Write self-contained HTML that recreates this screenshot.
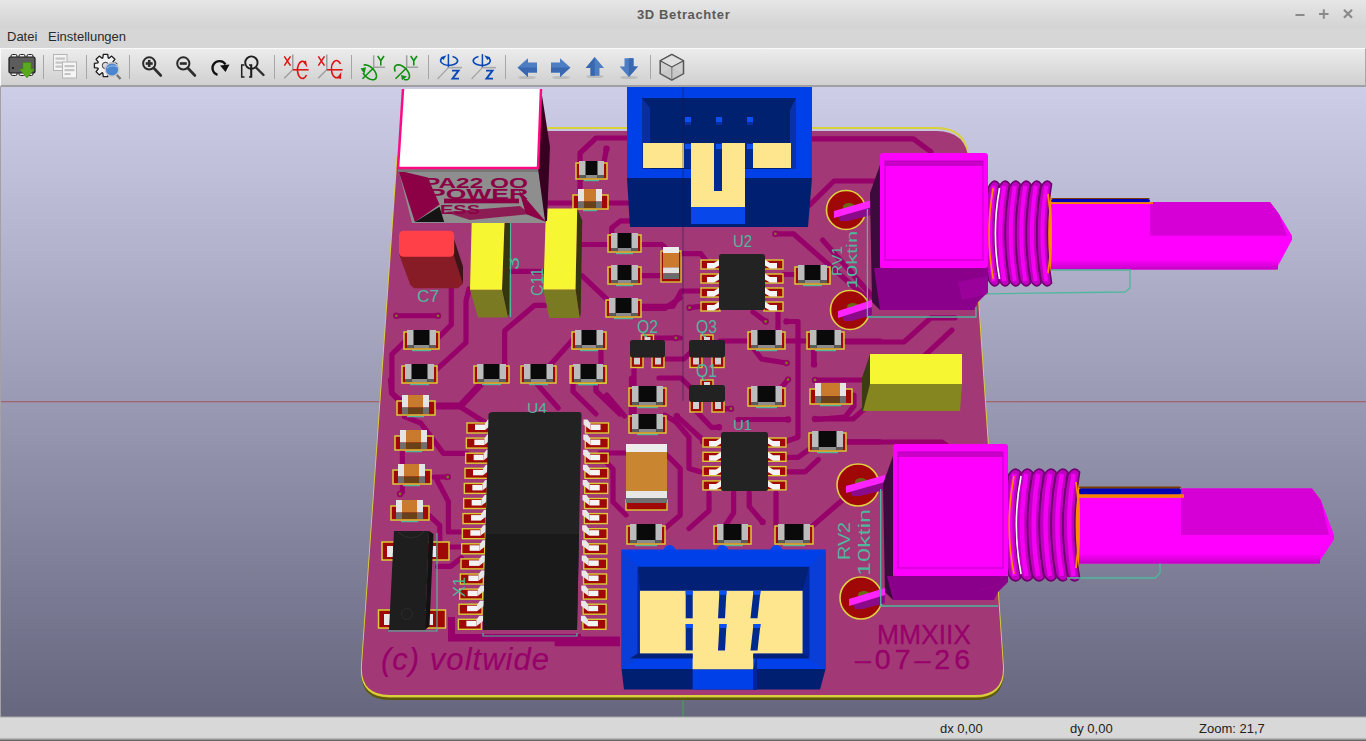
<!DOCTYPE html>
<html><head><meta charset="utf-8">
<style>
*{margin:0;padding:0;box-sizing:border-box}
html,body{width:1366px;height:741px;overflow:hidden;background:#d6d6d6;font-family:"Liberation Sans",sans-serif}
#title{position:absolute;left:0;top:0;width:1366px;height:28px;background:linear-gradient(#e6e6e6,#d3d3d3)}
#title .t{position:absolute;left:637px;top:7px;font-size:13px;font-weight:bold;color:#5a5a5a;letter-spacing:0.62px}
#menu{position:absolute;left:0;top:28px;width:1366px;height:20px;background:#d6d6d6;font-size:13px;color:#2a2a2a}
#menu span{position:absolute;top:1px}
#toolbar{position:absolute;left:0;top:48px;width:1366px;height:39px;background:linear-gradient(#ececec,#d0d0d0);border-top:1px solid #fafafa;border-left:1px solid #fafafa;border-right:1px solid #a8a8a8;border-bottom:2px solid #a0a0a0}
#status{position:absolute;left:0;top:717px;width:1366px;height:24px;background:linear-gradient(#d8d8d8 85%,#b0b0b0 91%,#505050);font-size:13px;color:#222}
#status span{position:absolute;top:4px}
svg{position:absolute;left:0;top:0}
svg text{font-family:"Liberation Sans",sans-serif}
</style></head><body>
<div id="title"><span class="t">3D Betrachter</span></div>
<div id="menu"><span style="left:7px">Datei</span><span style="left:48px">Einstellungen</span></div>
<div id="toolbar"></div>
<div id="status"><span style="left:940px">dx 0,00</span><span style="left:1070px">dy 0,00</span><span style="left:1199px">Zoom: 21,7</span></div>
<svg width="1366" height="741" viewBox="0 0 1366 741"><rect x="1295.5" y="14" width="9" height="2" fill="#8a8a8a"/><rect x="1319" y="13" width="9.5" height="2" fill="#8a8a8a"/><rect x="1322.8" y="9.3" width="2" height="9.5" fill="#8a8a8a"/><path d="M1344,9.8 L1352,17.8 M1352,9.8 L1344,17.8" stroke="#8a8a8a" stroke-width="2.2"/><rect x="43" y="55" width="1" height="24" fill="#a6a6a6"/><rect x="86" y="55" width="1" height="24" fill="#a6a6a6"/><rect x="129" y="55" width="1" height="24" fill="#a6a6a6"/><rect x="274" y="55" width="1" height="24" fill="#a6a6a6"/><rect x="351" y="55" width="1" height="24" fill="#a6a6a6"/><rect x="428" y="55" width="1" height="24" fill="#a6a6a6"/><rect x="505" y="55" width="1" height="24" fill="#a6a6a6"/><rect x="650" y="55" width="1" height="24" fill="#a6a6a6"/><g><rect x="11" y="54.5" width="6" height="4" rx="1.5" fill="#eee" stroke="#222" stroke-width="1"/><rect x="11" y="71.5" width="6" height="4" rx="1.5" fill="#eee" stroke="#222" stroke-width="1"/><rect x="19" y="54.5" width="6" height="4" rx="1.5" fill="#eee" stroke="#222" stroke-width="1"/><rect x="19" y="71.5" width="6" height="4" rx="1.5" fill="#eee" stroke="#222" stroke-width="1"/><rect x="27" y="54.5" width="6" height="4" rx="1.5" fill="#eee" stroke="#222" stroke-width="1"/><rect x="27" y="71.5" width="6" height="4" rx="1.5" fill="#eee" stroke="#222" stroke-width="1"/><rect x="9" y="57" width="26" height="16" rx="1.5" fill="#5c5c5c" stroke="#1a1a1a" stroke-width="1.2"/><circle cx="13" cy="68" r="1.1" fill="#111"/><polygon points="23,62.5 31,62.5 31,69 34.5,69 27,78 19.5,69 23,69" fill="#5aa81e" stroke="#3d8a10" stroke-width="0.6"/></g><rect x="53.5" y="54.5" width="13.5" height="16" fill="#f4f4f4" stroke="#b4b4b4" stroke-width="1"/><rect x="55.5" y="57.5" width="9.5" height="2.2" fill="#c4c4c4"/><rect x="55.5" y="61.5" width="9.5" height="2.2" fill="#c4c4c4"/><rect x="55.5" y="65.5" width="9.5" height="2.2" fill="#c4c4c4"/><rect x="62.5" y="62" width="14" height="16" fill="#f6f6f6" stroke="#b4b4b4" stroke-width="1"/><rect x="64.5" y="65" width="10" height="2.2" fill="#c4c4c4"/><rect x="64.5" y="69" width="10" height="2.2" fill="#c4c4c4"/><rect x="64.5" y="73" width="6" height="2" fill="#c4c4c4"/><polygon points="113.0,62.8 116.6,63.3 116.6,67.7 113.0,68.2 112.7,68.9 114.9,71.7 111.7,74.9 108.9,72.7 108.2,73.0 107.7,76.6 103.3,76.6 102.8,73.0 102.1,72.7 99.3,74.9 96.1,71.7 98.3,68.9 98.0,68.2 94.4,67.7 94.4,63.3 98.0,62.8 98.3,62.1 96.1,59.3 99.3,56.1 102.1,58.3 102.8,58.0 103.3,54.4 107.7,54.4 108.2,58.0 108.9,58.3 111.7,56.1 114.9,59.3 112.7,62.1" fill="#f2f2f2" stroke="#1c1c1c" stroke-width="1.3" stroke-linejoin="round"/><circle cx="105.5" cy="65.5" r="3.2" fill="#ddd" stroke="#333" stroke-width="1"/><line x1="116" y1="74" x2="120.5" y2="79" stroke="#777" stroke-width="2.5"/><circle cx="112" cy="69.5" r="6.8" fill="#4a86d0" stroke="#c8c8c8" stroke-width="1.4"/><path d="M107,68 Q112,64 117,67" stroke="#9cc0ec" stroke-width="1" fill="none"/><circle cx="149.2" cy="63.4" r="6.1" fill="none" stroke="#2a2a2a" stroke-width="2"/><line x1="153.7" y1="68" x2="160.8" y2="75.5" stroke="#2e2e2e" stroke-width="2.6" stroke-linecap="round"/><rect x="145.7" y="62.2" width="7" height="2.6" fill="#2a2a2a"/><rect x="147.9" y="59.9" width="2.6" height="7" fill="#2a2a2a"/><circle cx="183.3" cy="63.4" r="6.1" fill="none" stroke="#2a2a2a" stroke-width="2"/><line x1="187.8" y1="68" x2="194.9" y2="75.5" stroke="#2e2e2e" stroke-width="2.6" stroke-linecap="round"/><rect x="179.8" y="62.2" width="7" height="2.6" fill="#2a2a2a"/><path d="M217.5,74.8 A7,7 0 1 1 225.5,64.5" fill="none" stroke="#111" stroke-width="2.3"/><polygon points="220,65.5 229.5,64.5 225.5,72" fill="#111"/><circle cx="251.4" cy="62.6" r="6.2" fill="none" stroke="#1e1e1e" stroke-width="1.9"/><line x1="256" y1="67.5" x2="263.5" y2="75" stroke="#2e2e2e" stroke-width="2.4" stroke-linecap="round"/><path d="M244.5,65 L241.7,65 L241.7,77 L244.5,77 M249,65 L251.5,65 L251.5,77 L249,77" fill="none" stroke="#1e1e1e" stroke-width="1.5"/><line x1="251" y1="65" x2="251" y2="77" stroke="#1e1e1e" stroke-width="1.5"/><g transform="translate(0,0)"><line x1="292.8" y1="54.6" x2="292.8" y2="69.8" stroke="#9a9a9a" stroke-width="1.4"/><line x1="292.8" y1="69.8" x2="284.2" y2="78.3" stroke="#9a9a9a" stroke-width="1.2"/><line x1="292.8" y1="69.8" x2="308.6" y2="69.8" stroke="#e01818" stroke-width="1.6"/><path d="M284.3,56.3 L290.5,65.7 M290.5,56.3 L284.3,65.7" stroke="#e01010" stroke-width="1.5"/><path d="M305.5,63 A5,8.6 0 1 0 306.5,75" fill="none" stroke="#e01010" stroke-width="1.6"/><polygon points="303,62 306,60.5 307.3,67.5" fill="#e01010"/></g><g transform="translate(34,0)"><line x1="292.8" y1="54.6" x2="292.8" y2="69.8" stroke="#9a9a9a" stroke-width="1.4"/><line x1="292.8" y1="69.8" x2="284.2" y2="78.3" stroke="#9a9a9a" stroke-width="1.2"/><line x1="292.8" y1="69.8" x2="308.6" y2="69.8" stroke="#e01818" stroke-width="1.6"/><path d="M284.3,56.3 L290.5,65.7 M290.5,56.3 L284.3,65.7" stroke="#e01010" stroke-width="1.5"/><path d="M306.5,64 A5,8.6 0 1 0 304.5,77" fill="none" stroke="#e01010" stroke-width="1.6"/><polygon points="303,78 307,79 307.3,72" fill="#e01010"/></g><g transform="translate(0,0)"><path d="M373.7,55.3 L373.7,67.3 L385.1,67.3" fill="none" stroke="#a0a0a0" stroke-width="1.5"/><path d="M377.7,56 L380.8,60.8 L384,56 M380.8,60.8 L380.8,65.5" fill="none" stroke="#109010" stroke-width="1.6"/><line x1="373.5" y1="68" x2="362.5" y2="78.7" stroke="#109010" stroke-width="1.6"/><polyline points="364.14,64.93 364.85,64.84 365.60,64.85 366.41,64.96 367.25,65.17 368.12,65.49 369.00,65.90 369.88,66.39 370.74,66.97 371.58,67.63 372.39,68.34 373.15,69.12 373.85,69.93 374.49,70.78 375.04,71.65 375.52,72.53 375.90,73.41 376.19,74.27 376.38,75.10 376.47,75.90 376.45,76.64 376.33,77.33 376.11,77.94 375.79,78.48 375.37,78.93 374.87,79.29 374.29,79.55 373.63,79.71 372.91,79.77 372.13,79.73 371.31,79.58 370.46,79.33 369.59,78.99 368.71,78.55 367.83,78.02 366.97,77.42 366.14,76.74 365.35,76.01 364.61,75.22 363.93,74.39 363.32,73.53" fill="none" stroke="#109010" stroke-width="1.6" stroke-linecap="round"/><polygon points="360.5,68.5 366,67.3 364.5,74" fill="#109010"/></g><g transform="translate(33,0)"><path d="M373.7,55.3 L373.7,67.3 L385.1,67.3" fill="none" stroke="#a0a0a0" stroke-width="1.5"/><path d="M377.7,56 L380.8,60.8 L384,56 M380.8,60.8 L380.8,65.5" fill="none" stroke="#109010" stroke-width="1.6"/><line x1="373.5" y1="68" x2="362.5" y2="78.7" stroke="#109010" stroke-width="1.6"/><polyline points="362.00,70.94 361.74,70.08 361.58,69.26 361.53,68.48 361.58,67.75 361.73,67.08 361.98,66.49 362.33,65.98 362.77,65.55 363.29,65.22 363.90,64.99 364.58,64.86 365.32,64.83 366.11,64.91 366.94,65.08 367.80,65.36 368.67,65.73 369.55,66.20 370.42,66.75 371.28,67.38 372.10,68.07 372.87,68.82 373.60,69.62 374.26,70.46 374.85,71.33 375.35,72.21 375.77,73.08 376.10,73.95 376.32,74.80 376.45,75.61 376.47,76.37 376.39,77.08 376.20,77.72 375.92,78.29 375.54,78.77 375.07,79.17 374.51,79.47 373.88,79.67 373.18,79.76 372.42,79.76 371.62,79.65" fill="none" stroke="#109010" stroke-width="1.6" stroke-linecap="round"/><polygon points="368,75 374,76.5 369,80.3" fill="#109010"/></g><g transform="translate(0,0)"><line x1="448.4" y1="54.1" x2="448.4" y2="67.6" stroke="#0a48b8" stroke-width="1.5"/><line x1="448.4" y1="67.6" x2="462" y2="67.6" stroke="#a8a8a8" stroke-width="1.6"/><line x1="448.4" y1="67.6" x2="437.6" y2="79" stroke="#a0a0a0" stroke-width="1.1"/><path d="M443,57.5 A8.5,4.6 0 1 0 452.5,56.5" fill="none" stroke="#0a48b8" stroke-width="1.6"/><polygon points="440.5,57.3 446.5,55.3 443.5,60" fill="#0a48b8"/><path d="M452,70.6 L458.5,70.6 L452.5,78.6 L459,78.6" fill="none" stroke="#0a48b8" stroke-width="1.9"/></g><g transform="translate(34,0)"><line x1="448.4" y1="54.1" x2="448.4" y2="67.6" stroke="#0a48b8" stroke-width="1.5"/><line x1="448.4" y1="67.6" x2="462" y2="67.6" stroke="#a8a8a8" stroke-width="1.6"/><line x1="448.4" y1="67.6" x2="437.6" y2="79" stroke="#a0a0a0" stroke-width="1.1"/><path d="M444.5,56.5 A8.5,4.6 0 1 0 453.8,57.5" fill="none" stroke="#0a48b8" stroke-width="1.6"/><polygon points="456.3,57.3 450.3,55.3 453.3,60" fill="#0a48b8"/><path d="M452,70.6 L458.5,70.6 L452.5,78.6 L459,78.6" fill="none" stroke="#0a48b8" stroke-width="1.9"/></g><ellipse cx="527" cy="77.5" rx="9" ry="1.6" fill="#000" opacity="0.12"/><polygon points="517.5,67.5 528,58.3 528,62.5 537,62.5 537,72.5 528,72.5 528,77 " fill="#4d7ec4"/><polygon points="528,67.5 537,67.5 537,72.5 528,72.5 528,77 517.5,67.5" fill="#3968b0"/><ellipse cx="561" cy="77.5" rx="9" ry="1.6" fill="#000" opacity="0.12"/><polygon points="570.4,67.5 560,58.3 560,62.5 551,62.5 551,72.5 560,72.5 560,77 " fill="#4d7ec4"/><polygon points="560,67.5 551,67.5 551,72.5 560,72.5 560,77 570.4,67.5" fill="#3968b0"/><ellipse cx="595" cy="76.5" rx="9" ry="1.6" fill="#000" opacity="0.12"/><polygon points="594.8,57 604,68 599.5,68 599.5,75.7 590.5,75.7 590.5,68 585.7,68" fill="#4d7ec4"/><polygon points="594.8,57 585.7,68 590.5,68 590.5,75.7 594.8,75.7" fill="#3968b0"/><ellipse cx="629" cy="77.5" rx="9" ry="1.6" fill="#000" opacity="0.12"/><polygon points="628.8,77 638,66.5 633.5,66.5 633.5,58.3 624.5,58.3 624.5,66.5 619.7,66.5" fill="#4d7ec4"/><polygon points="628.8,77 638,66.5 633.5,66.5 633.5,58.3 628.8,58.3" fill="#3968b0"/><polygon points="671.8,54.5 683.5,60.8 683.5,73.7 671.8,80 660.2,73.7 660.2,60.8" fill="#d0d0d0" stroke="#555" stroke-width="1.5" stroke-linejoin="round"/><polygon points="660.2,60.8 671.8,67 683.5,60.8 671.8,54.5" fill="#e0e0e0" stroke="#555" stroke-width="1.3" stroke-linejoin="round"/><line x1="671.8" y1="67" x2="671.8" y2="80" stroke="#555" stroke-width="1.3"/><polygon points="660.8,73.4 671.8,67.2 683,73.4 671.8,79.6" fill="#c0c0c0" opacity="0.5"/><defs><clipPath id="cv"><rect x="1" y="87" width="1365" height="630"/></clipPath><linearGradient id="bg" x1="0" y1="0" x2="0" y2="1"><stop offset="0" stop-color="#cdcde7"/><stop offset="1" stop-color="#66667f"/></linearGradient><linearGradient id="shb" x1="0" y1="0" x2="0" y2="1"><stop offset="0" stop-color="#ff00ff"/><stop offset="1" stop-color="#c400c4"/></linearGradient></defs><g clip-path="url(#cv)"><rect x="0.00" y="87.00" width="1366.00" height="630.00" fill="url(#bg)" /><rect x="0.00" y="401.00" width="1366.00" height="1.30" fill="#a4646f" /><path d="M429.12,134 L936.776,134 Q966.776,134 968.816,164 L1003.22,670 Q1005.26,700 975.264,700 L389.5,700 Q359.5,700 361.6,670 L397.02,164 Q399.12,134 429.12,134 Z" fill="#5b5a0c"/><path d="M429.26,132 L936.64,132 Q966.64,132 968.68,162 L1003.05,667.5 Q1005.09,697.5 975.094,697.5 L389.675,697.5 Q359.675,697.5 361.775,667.5 L397.16,162 Q399.26,132 429.26,132 Z" fill="#d7b533"/><path d="M429.54,128 L936.368,128 Q966.368,128 968.408,158 L1002.95,666 Q1004.99,696 974.992,696 L389.78,696 Q359.78,696 361.88,666 L397.44,158 Q399.54,128 429.54,128 Z" fill="none" stroke="#d9d13c" stroke-width="1.8"/><path d="M429.33,131 L936.572,131 Q966.572,131 968.612,161 L1002.88,665 Q1004.92,695 974.924,695 L389.85,695 Q359.85,695 361.95,665 L397.23,161 Q399.33,131 429.33,131 Z" fill="#a23976"/><polyline points="396.30,315.80 438.00,315.80" fill="none" stroke="#97016a" stroke-width="5" stroke-linejoin="round" stroke-linecap="round"/><circle cx="396.3" cy="315.8" r="3.2" fill="#97016a"/><circle cx="396.3" cy="315.8" r="1.4" fill="#7a7a18"/><circle cx="438" cy="315.8" r="3.2" fill="#97016a"/><circle cx="438" cy="315.8" r="1.4" fill="#7a7a18"/><polyline points="451.30,286.00 451.30,324.70 436.40,339.60" fill="none" stroke="#97016a" stroke-width="5.2" stroke-linejoin="round" stroke-linecap="round"/><polyline points="406.70,339.60 391.90,354.40 391.90,393.00 402.30,405.00" fill="none" stroke="#97016a" stroke-width="5.2" stroke-linejoin="round" stroke-linecap="round"/><polyline points="469.00,289.00 466.00,301.00 466.00,342.60 433.50,372.30" fill="none" stroke="#97016a" stroke-width="5.2" stroke-linejoin="round" stroke-linecap="round"/><polyline points="482.50,381.00 460.00,405.00 436.40,405.00" fill="none" stroke="#97016a" stroke-width="5.2" stroke-linejoin="round" stroke-linecap="round"/><polyline points="544.80,305.40 534.40,305.40 504.70,330.70 504.70,366.30" fill="none" stroke="#97016a" stroke-width="5.2" stroke-linejoin="round" stroke-linecap="round"/><polyline points="510.70,271.30 543.40,271.30" fill="none" stroke="#97016a" stroke-width="5.2" stroke-linejoin="round" stroke-linecap="round"/><polyline points="579.00,244.50 608.70,244.50" fill="none" stroke="#97016a" stroke-width="5.2" stroke-linejoin="round" stroke-linecap="round"/><polyline points="582.00,275.70 608.70,301.00" fill="none" stroke="#97016a" stroke-width="5.2" stroke-linejoin="round" stroke-linecap="round"/><polyline points="611.70,244.50 611.70,228.00 620.60,220.80 629.50,220.80" fill="none" stroke="#97016a" stroke-width="5.2" stroke-linejoin="round" stroke-linecap="round"/><polyline points="641.40,244.50 662.00,244.50 671.00,253.50" fill="none" stroke="#97016a" stroke-width="5.2" stroke-linejoin="round" stroke-linecap="round"/><polyline points="641.40,275.70 662.00,275.70" fill="none" stroke="#97016a" stroke-width="5.2" stroke-linejoin="round" stroke-linecap="round"/><polyline points="641.40,308.40 665.00,308.40 680.00,298.00" fill="none" stroke="#97016a" stroke-width="5.2" stroke-linejoin="round" stroke-linecap="round"/><polyline points="573.00,339.60 546.30,369.30" fill="none" stroke="#97016a" stroke-width="5.2" stroke-linejoin="round" stroke-linecap="round"/><polyline points="601.00,339.60 601.00,366.00" fill="none" stroke="#97016a" stroke-width="5.2" stroke-linejoin="round" stroke-linecap="round"/><polyline points="534.40,381.00 558.20,408.00" fill="none" stroke="#97016a" stroke-width="5.2" stroke-linejoin="round" stroke-linecap="round"/><polyline points="573.00,382.60 573.00,391.40 596.00,414.00" fill="none" stroke="#97016a" stroke-width="5.2" stroke-linejoin="round" stroke-linecap="round"/><polyline points="596.00,382.60 596.00,391.00 620.00,414.00" fill="none" stroke="#97016a" stroke-width="5.2" stroke-linejoin="round" stroke-linecap="round"/><polyline points="634.00,365.00 634.00,420.00" fill="none" stroke="#97016a" stroke-width="5.2" stroke-linejoin="round" stroke-linecap="round"/><polyline points="647.30,338.00 680.00,338.00" fill="none" stroke="#97016a" stroke-width="5.2" stroke-linejoin="round" stroke-linecap="round"/><circle cx="675.8" cy="338" r="3.2" fill="#97016a"/><circle cx="675.8" cy="338" r="1.4" fill="#7a7a18"/><polyline points="665.00,359.00 684.00,359.00 692.40,350.60" fill="none" stroke="#97016a" stroke-width="5.2" stroke-linejoin="round" stroke-linecap="round"/><polyline points="659.00,378.00 681.00,378.00 695.00,392.00" fill="none" stroke="#97016a" stroke-width="5.2" stroke-linejoin="round" stroke-linecap="round"/><polyline points="580.00,180.00 580.00,153.00 596.00,138.00 627.00,138.00" fill="none" stroke="#97016a" stroke-width="5.2" stroke-linejoin="round" stroke-linecap="round"/><circle cx="606.5" cy="148.7" r="3.2" fill="#97016a"/><circle cx="606.5" cy="148.7" r="1.4" fill="#7a7a18"/><polyline points="606.50,148.70 604.00,162.00" fill="none" stroke="#97016a" stroke-width="5.2" stroke-linejoin="round" stroke-linecap="round"/><polyline points="549.00,203.00 579.00,203.00" fill="none" stroke="#97016a" stroke-width="5.2" stroke-linejoin="round" stroke-linecap="round"/><polyline points="609.00,203.00 627.00,203.00" fill="none" stroke="#97016a" stroke-width="5.2" stroke-linejoin="round" stroke-linecap="round"/><polyline points="580.00,180.00 580.00,190.00" fill="none" stroke="#97016a" stroke-width="5.2" stroke-linejoin="round" stroke-linecap="round"/><polyline points="680.00,253.70 700.70,253.70 706.00,260.60" fill="none" stroke="#97016a" stroke-width="5.2" stroke-linejoin="round" stroke-linecap="round"/><polyline points="700.70,291.00 681.30,291.00 673.00,306.30 641.20,306.30" fill="none" stroke="#97016a" stroke-width="5.2" stroke-linejoin="round" stroke-linecap="round"/><polyline points="700.70,306.30 689.60,307.70" fill="none" stroke="#97016a" stroke-width="5.2" stroke-linejoin="round" stroke-linecap="round"/><circle cx="689.6" cy="307.7" r="3.2" fill="#97016a"/><circle cx="689.6" cy="307.7" r="1.4" fill="#7a7a18"/><polyline points="775.40,233.80 793.40,233.80 866.70,298.00" fill="none" stroke="#97016a" stroke-width="5.2" stroke-linejoin="round" stroke-linecap="round"/><circle cx="775.4" cy="233.8" r="3.2" fill="#97016a"/><circle cx="775.4" cy="233.8" r="1.4" fill="#7a7a18"/><polyline points="783.70,274.50 797.50,274.50" fill="none" stroke="#97016a" stroke-width="5.2" stroke-linejoin="round" stroke-linecap="round"/><polyline points="753.00,312.00 765.70,321.50" fill="none" stroke="#97016a" stroke-width="5.2" stroke-linejoin="round" stroke-linecap="round"/><circle cx="765.7" cy="321.5" r="3.2" fill="#97016a"/><circle cx="765.7" cy="321.5" r="1.4" fill="#7a7a18"/><polyline points="778.00,309.00 778.00,339.50" fill="none" stroke="#97016a" stroke-width="5.2" stroke-linejoin="round" stroke-linecap="round"/><circle cx="786.5" cy="321.5" r="3.2" fill="#97016a"/><circle cx="786.5" cy="321.5" r="1.4" fill="#7a7a18"/><polyline points="720.00,341.00 749.00,341.00" fill="none" stroke="#97016a" stroke-width="5.2" stroke-linejoin="round" stroke-linecap="round"/><polyline points="782.30,341.00 808.60,341.00" fill="none" stroke="#97016a" stroke-width="5.2" stroke-linejoin="round" stroke-linecap="round"/><polyline points="825.00,341.00 880.00,341.00" fill="none" stroke="#97016a" stroke-width="5.2" stroke-linejoin="round" stroke-linecap="round"/><polyline points="814.00,345.00 814.00,364.40" fill="none" stroke="#97016a" stroke-width="5.2" stroke-linejoin="round" stroke-linecap="round"/><circle cx="814" cy="364.4" r="3.2" fill="#97016a"/><circle cx="814" cy="364.4" r="1.4" fill="#7a7a18"/><polyline points="753.00,348.00 761.50,359.00 786.50,363.00" fill="none" stroke="#97016a" stroke-width="5.2" stroke-linejoin="round" stroke-linecap="round"/><circle cx="786.5" cy="363" r="3.2" fill="#97016a"/><circle cx="786.5" cy="363" r="1.4" fill="#7a7a18"/><polyline points="788.00,379.60 781.00,388.00" fill="none" stroke="#97016a" stroke-width="5.2" stroke-linejoin="round" stroke-linecap="round"/><circle cx="788" cy="379.6" r="3.2" fill="#97016a"/><circle cx="788" cy="379.6" r="1.4" fill="#7a7a18"/><polyline points="631.50,378.30 631.50,420.00" fill="none" stroke="#97016a" stroke-width="5.2" stroke-linejoin="round" stroke-linecap="round"/><polyline points="720.00,408.70 731.00,408.70" fill="none" stroke="#97016a" stroke-width="5.2" stroke-linejoin="round" stroke-linecap="round"/><circle cx="731" cy="408.7" r="3.2" fill="#97016a"/><circle cx="731" cy="408.7" r="1.4" fill="#7a7a18"/><polyline points="786.50,321.50 798.00,321.50 798.00,437.30 784.90,441.80" fill="none" stroke="#97016a" stroke-width="5.2" stroke-linejoin="round" stroke-linecap="round"/><polyline points="842.00,342.00 904.00,342.00 931.00,317.80 955.00,317.80" fill="none" stroke="#97016a" stroke-width="5.2" stroke-linejoin="round" stroke-linecap="round"/><polyline points="890.00,360.00 920.00,360.00 952.00,330.00" fill="none" stroke="#97016a" stroke-width="5.2" stroke-linejoin="round" stroke-linecap="round"/><polyline points="815.00,380.00 863.70,380.00" fill="none" stroke="#97016a" stroke-width="5.2" stroke-linejoin="round" stroke-linecap="round"/><circle cx="815" cy="380" r="3.2" fill="#97016a"/><circle cx="815" cy="380" r="1.4" fill="#7a7a18"/><polyline points="815.00,419.00 853.00,419.00 863.70,409.50" fill="none" stroke="#97016a" stroke-width="5.2" stroke-linejoin="round" stroke-linecap="round"/><circle cx="815" cy="419" r="3.2" fill="#97016a"/><circle cx="815" cy="419" r="1.4" fill="#7a7a18"/><polyline points="844.80,442.00 942.00,442.00 950.00,448.00" fill="none" stroke="#97016a" stroke-width="5.2" stroke-linejoin="round" stroke-linecap="round"/><polyline points="813.70,342.00 813.70,363.70" fill="none" stroke="#97016a" stroke-width="5.2" stroke-linejoin="round" stroke-linecap="round"/><polyline points="813.00,138.90 913.40,138.90 931.00,151.80" fill="none" stroke="#97016a" stroke-width="5.2" stroke-linejoin="round" stroke-linecap="round"/><polyline points="809.70,205.00 834.00,181.00 874.50,181.00" fill="none" stroke="#97016a" stroke-width="5.2" stroke-linejoin="round" stroke-linecap="round"/><polyline points="822.60,240.00 879.00,304.00" fill="none" stroke="#97016a" stroke-width="5.2" stroke-linejoin="round" stroke-linecap="round"/><polyline points="402.00,401.60 391.60,393.00 390.50,380.00" fill="none" stroke="#97016a" stroke-width="5.2" stroke-linejoin="round" stroke-linecap="round"/><polyline points="438.00,407.00 460.60,407.00 482.00,384.30" fill="none" stroke="#97016a" stroke-width="5.2" stroke-linejoin="round" stroke-linecap="round"/><polyline points="460.60,407.00 486.00,423.00" fill="none" stroke="#97016a" stroke-width="5.2" stroke-linejoin="round" stroke-linecap="round"/><polyline points="404.50,416.70 420.70,423.00 443.40,453.40 467.00,453.40" fill="none" stroke="#97016a" stroke-width="5.2" stroke-linejoin="round" stroke-linecap="round"/><polyline points="433.70,477.00 447.70,477.00" fill="none" stroke="#97016a" stroke-width="5.2" stroke-linejoin="round" stroke-linecap="round"/><circle cx="447.7" cy="477" r="3.2" fill="#97016a"/><circle cx="447.7" cy="477" r="1.4" fill="#7a7a18"/><polyline points="402.40,451.00 402.40,492.00" fill="none" stroke="#97016a" stroke-width="5.2" stroke-linejoin="round" stroke-linecap="round"/><circle cx="400" cy="494" r="3.2" fill="#97016a"/><circle cx="400" cy="494" r="1.4" fill="#7a7a18"/><polyline points="606.70,395.00 624.50,416.00" fill="none" stroke="#97016a" stroke-width="5.2" stroke-linejoin="round" stroke-linecap="round"/><polyline points="664.60,415.00 675.70,421.70 689.00,437.30 689.00,468.50 700.20,471.80" fill="none" stroke="#97016a" stroke-width="5.2" stroke-linejoin="round" stroke-linecap="round"/><circle cx="676.8" cy="416.2" r="3.2" fill="#97016a"/><circle cx="676.8" cy="416.2" r="1.4" fill="#7a7a18"/><polyline points="676.80,416.20 702.40,439.50 702.40,441.80" fill="none" stroke="#97016a" stroke-width="5.2" stroke-linejoin="round" stroke-linecap="round"/><circle cx="719" cy="427.3" r="3.2" fill="#97016a"/><circle cx="719" cy="427.3" r="1.4" fill="#7a7a18"/><polyline points="719.00,427.30 711.40,427.30 693.50,408.40 693.50,404.00" fill="none" stroke="#97016a" stroke-width="5.2" stroke-linejoin="round" stroke-linecap="round"/><circle cx="788" cy="419.5" r="3.2" fill="#97016a"/><circle cx="788" cy="419.5" r="1.4" fill="#7a7a18"/><polyline points="738.00,419.50 788.00,419.50" fill="none" stroke="#97016a" stroke-width="5.2" stroke-linejoin="round" stroke-linecap="round"/><polyline points="854.00,395.00 854.00,406.00 845.00,417.00 816.00,419.50" fill="none" stroke="#97016a" stroke-width="5.2" stroke-linejoin="round" stroke-linecap="round"/><polyline points="787.00,457.40 798.00,457.40 813.80,446.20" fill="none" stroke="#97016a" stroke-width="5.2" stroke-linejoin="round" stroke-linecap="round"/><polyline points="787.00,471.80 805.00,471.80 818.30,459.60" fill="none" stroke="#97016a" stroke-width="5.2" stroke-linejoin="round" stroke-linecap="round"/><polyline points="845.00,441.80 880.00,441.80" fill="none" stroke="#97016a" stroke-width="5.2" stroke-linejoin="round" stroke-linecap="round"/><polyline points="709.00,493.00 709.00,510.80 689.00,528.60" fill="none" stroke="#97016a" stroke-width="5.2" stroke-linejoin="round" stroke-linecap="round"/><polyline points="733.60,493.00 733.60,513.00 724.70,526.40" fill="none" stroke="#97016a" stroke-width="5.2" stroke-linejoin="round" stroke-linecap="round"/><circle cx="762.6" cy="522" r="3.2" fill="#97016a"/><circle cx="762.6" cy="522" r="1.4" fill="#7a7a18"/><polyline points="749.20,493.00 749.20,506.40 762.60,522.00" fill="none" stroke="#97016a" stroke-width="5.2" stroke-linejoin="round" stroke-linecap="round"/><polyline points="776.00,493.00 776.00,526.40" fill="none" stroke="#97016a" stroke-width="5.2" stroke-linejoin="round" stroke-linecap="round"/><polyline points="809.40,528.60 842.80,499.70" fill="none" stroke="#97016a" stroke-width="5.2" stroke-linejoin="round" stroke-linecap="round"/><polyline points="666.80,455.00 680.20,468.50 680.20,515.30 664.60,528.60" fill="none" stroke="#97016a" stroke-width="5.2" stroke-linejoin="round" stroke-linecap="round"/><polyline points="600.00,453.00 624.50,453.00" fill="none" stroke="#97016a" stroke-width="5.2" stroke-linejoin="round" stroke-linecap="round"/><polyline points="606.00,462.00 613.00,469.00 613.00,502.00 626.00,515.00" fill="none" stroke="#97016a" stroke-width="5.2" stroke-linejoin="round" stroke-linecap="round"/><polyline points="425.80,512.40 439.80,525.40 439.80,540.00" fill="none" stroke="#97016a" stroke-width="5.2" stroke-linejoin="round" stroke-linecap="round"/><polyline points="445.00,547.00 464.00,547.00" fill="none" stroke="#97016a" stroke-width="5.2" stroke-linejoin="round" stroke-linecap="round"/><polyline points="437.60,566.40 450.60,566.40 461.40,557.80" fill="none" stroke="#97016a" stroke-width="5.2" stroke-linejoin="round" stroke-linecap="round"/><polyline points="437.00,480.00 448.40,501.60 448.40,532.00 464.00,532.00" fill="none" stroke="#97016a" stroke-width="5.2" stroke-linejoin="round" stroke-linecap="round"/><polygon points="448.00,617.00 455.00,617.00 455.00,634.00 581.00,634.00 581.00,636.60 620.00,636.60 620.00,646.30 554.60,646.30 554.60,641.40 448.00,641.40" fill="#97016a" /><text transform="translate(518.5,270) rotate(-90)" font-size="16" fill="#4fb89c" textLength="13" lengthAdjust="spacingAndGlyphs">3</text><line x1="510.5" y1="215" x2="510.5" y2="317" stroke="#4fb89c" stroke-width="1.2"/><text transform="translate(543,296) rotate(-90)" font-size="16" fill="#4fb89c" textLength="28" lengthAdjust="spacingAndGlyphs">C11</text><rect x="576.00" y="163.00" width="31.00" height="16.00" fill="#a00808" stroke="#dccb36" stroke-width="1.5"/><rect x="579.00" y="161.00" width="25.00" height="17.00" fill="#0a0a0a" /><rect x="579.00" y="161.00" width="6.50" height="14.00" fill="#bcbcbc" /><rect x="597.50" y="161.00" width="6.50" height="14.00" fill="#bcbcbc" /><rect x="585.50" y="175.00" width="12.00" height="3.00" fill="#8c8c8c" /><rect x="579.00" y="175.00" width="6.50" height="3.00" fill="#5c5c5c" /><rect x="597.50" y="175.00" width="6.50" height="3.00" fill="#5c5c5c" /><rect x="584.00" y="180.00" width="15.00" height="1.20" fill="#4fb89c" /><rect x="608.00" y="235.00" width="33.00" height="17.00" fill="#a00808" stroke="#dccb36" stroke-width="1.5"/><rect x="611.00" y="233.00" width="27.00" height="18.00" fill="#0a0a0a" /><rect x="611.00" y="233.00" width="6.50" height="15.00" fill="#bcbcbc" /><rect x="631.50" y="233.00" width="6.50" height="15.00" fill="#bcbcbc" /><rect x="617.50" y="248.00" width="14.00" height="3.00" fill="#8c8c8c" /><rect x="611.00" y="248.00" width="6.50" height="3.00" fill="#5c5c5c" /><rect x="631.50" y="248.00" width="6.50" height="3.00" fill="#5c5c5c" /><rect x="616.00" y="253.00" width="17.00" height="1.20" fill="#4fb89c" /><rect x="608.00" y="267.00" width="33.00" height="17.00" fill="#a00808" stroke="#dccb36" stroke-width="1.5"/><rect x="611.00" y="265.00" width="27.00" height="18.00" fill="#0a0a0a" /><rect x="611.00" y="265.00" width="6.50" height="15.00" fill="#bcbcbc" /><rect x="631.50" y="265.00" width="6.50" height="15.00" fill="#bcbcbc" /><rect x="617.50" y="280.00" width="14.00" height="3.00" fill="#8c8c8c" /><rect x="611.00" y="280.00" width="6.50" height="3.00" fill="#5c5c5c" /><rect x="631.50" y="280.00" width="6.50" height="3.00" fill="#5c5c5c" /><rect x="616.00" y="285.00" width="17.00" height="1.20" fill="#4fb89c" /><rect x="606.00" y="300.00" width="35.00" height="17.00" fill="#a00808" stroke="#dccb36" stroke-width="1.5"/><rect x="609.00" y="298.00" width="29.00" height="18.00" fill="#0a0a0a" /><rect x="609.00" y="298.00" width="6.50" height="15.00" fill="#bcbcbc" /><rect x="631.50" y="298.00" width="6.50" height="15.00" fill="#bcbcbc" /><rect x="615.50" y="313.00" width="16.00" height="3.00" fill="#8c8c8c" /><rect x="609.00" y="313.00" width="6.50" height="3.00" fill="#5c5c5c" /><rect x="631.50" y="313.00" width="6.50" height="3.00" fill="#5c5c5c" /><rect x="614.00" y="318.00" width="19.00" height="1.20" fill="#4fb89c" /><rect x="795.00" y="267.00" width="35.00" height="17.00" fill="#a00808" stroke="#dccb36" stroke-width="1.5"/><rect x="798.00" y="265.00" width="29.00" height="18.00" fill="#0a0a0a" /><rect x="798.00" y="265.00" width="6.50" height="15.00" fill="#bcbcbc" /><rect x="820.50" y="265.00" width="6.50" height="15.00" fill="#bcbcbc" /><rect x="804.50" y="280.00" width="16.00" height="3.00" fill="#8c8c8c" /><rect x="798.00" y="280.00" width="6.50" height="3.00" fill="#5c5c5c" /><rect x="820.50" y="280.00" width="6.50" height="3.00" fill="#5c5c5c" /><rect x="803.00" y="285.00" width="19.00" height="1.20" fill="#4fb89c" /><rect x="572.00" y="332.00" width="34.00" height="17.00" fill="#a00808" stroke="#dccb36" stroke-width="1.5"/><rect x="575.00" y="330.00" width="28.00" height="18.00" fill="#0a0a0a" /><rect x="575.00" y="330.00" width="6.50" height="15.00" fill="#bcbcbc" /><rect x="596.50" y="330.00" width="6.50" height="15.00" fill="#bcbcbc" /><rect x="581.50" y="345.00" width="15.00" height="3.00" fill="#8c8c8c" /><rect x="575.00" y="345.00" width="6.50" height="3.00" fill="#5c5c5c" /><rect x="596.50" y="345.00" width="6.50" height="3.00" fill="#5c5c5c" /><rect x="580.00" y="350.00" width="18.00" height="1.20" fill="#4fb89c" /><rect x="570.00" y="366.00" width="36.00" height="17.00" fill="#a00808" stroke="#dccb36" stroke-width="1.5"/><rect x="573.00" y="364.00" width="30.00" height="18.00" fill="#0a0a0a" /><rect x="573.00" y="364.00" width="6.50" height="15.00" fill="#bcbcbc" /><rect x="596.50" y="364.00" width="6.50" height="15.00" fill="#bcbcbc" /><rect x="579.50" y="379.00" width="17.00" height="3.00" fill="#8c8c8c" /><rect x="573.00" y="379.00" width="6.50" height="3.00" fill="#5c5c5c" /><rect x="596.50" y="379.00" width="6.50" height="3.00" fill="#5c5c5c" /><rect x="578.00" y="384.00" width="20.00" height="1.20" fill="#4fb89c" /><rect x="629.00" y="388.00" width="37.00" height="18.00" fill="#a00808" stroke="#dccb36" stroke-width="1.5"/><rect x="632.00" y="386.00" width="31.00" height="19.00" fill="#0a0a0a" /><rect x="632.00" y="386.00" width="6.50" height="16.00" fill="#bcbcbc" /><rect x="656.50" y="386.00" width="6.50" height="16.00" fill="#bcbcbc" /><rect x="638.50" y="402.00" width="18.00" height="3.00" fill="#8c8c8c" /><rect x="632.00" y="402.00" width="6.50" height="3.00" fill="#5c5c5c" /><rect x="656.50" y="402.00" width="6.50" height="3.00" fill="#5c5c5c" /><rect x="637.00" y="407.00" width="21.00" height="1.20" fill="#4fb89c" /><rect x="748.00" y="332.00" width="37.00" height="17.00" fill="#a00808" stroke="#dccb36" stroke-width="1.5"/><rect x="751.00" y="330.00" width="31.00" height="18.00" fill="#0a0a0a" /><rect x="751.00" y="330.00" width="6.50" height="15.00" fill="#bcbcbc" /><rect x="775.50" y="330.00" width="6.50" height="15.00" fill="#bcbcbc" /><rect x="757.50" y="345.00" width="18.00" height="3.00" fill="#8c8c8c" /><rect x="751.00" y="345.00" width="6.50" height="3.00" fill="#5c5c5c" /><rect x="775.50" y="345.00" width="6.50" height="3.00" fill="#5c5c5c" /><rect x="756.00" y="350.00" width="21.00" height="1.20" fill="#4fb89c" /><rect x="807.00" y="332.00" width="37.00" height="17.00" fill="#a00808" stroke="#dccb36" stroke-width="1.5"/><rect x="810.00" y="330.00" width="31.00" height="18.00" fill="#0a0a0a" /><rect x="810.00" y="330.00" width="6.50" height="15.00" fill="#bcbcbc" /><rect x="834.50" y="330.00" width="6.50" height="15.00" fill="#bcbcbc" /><rect x="816.50" y="345.00" width="18.00" height="3.00" fill="#8c8c8c" /><rect x="810.00" y="345.00" width="6.50" height="3.00" fill="#5c5c5c" /><rect x="834.50" y="345.00" width="6.50" height="3.00" fill="#5c5c5c" /><rect x="815.00" y="350.00" width="21.00" height="1.20" fill="#4fb89c" /><rect x="748.00" y="388.00" width="37.00" height="18.00" fill="#a00808" stroke="#dccb36" stroke-width="1.5"/><rect x="751.00" y="386.00" width="31.00" height="19.00" fill="#0a0a0a" /><rect x="751.00" y="386.00" width="6.50" height="16.00" fill="#bcbcbc" /><rect x="775.50" y="386.00" width="6.50" height="16.00" fill="#bcbcbc" /><rect x="757.50" y="402.00" width="18.00" height="3.00" fill="#8c8c8c" /><rect x="751.00" y="402.00" width="6.50" height="3.00" fill="#5c5c5c" /><rect x="775.50" y="402.00" width="6.50" height="3.00" fill="#5c5c5c" /><rect x="756.00" y="407.00" width="21.00" height="1.20" fill="#4fb89c" /><rect x="404.00" y="332.00" width="35.00" height="17.00" fill="#a00808" stroke="#dccb36" stroke-width="1.5"/><rect x="407.00" y="330.00" width="29.00" height="18.00" fill="#0a0a0a" /><rect x="407.00" y="330.00" width="6.50" height="15.00" fill="#bcbcbc" /><rect x="429.50" y="330.00" width="6.50" height="15.00" fill="#bcbcbc" /><rect x="413.50" y="345.00" width="16.00" height="3.00" fill="#8c8c8c" /><rect x="407.00" y="345.00" width="6.50" height="3.00" fill="#5c5c5c" /><rect x="429.50" y="345.00" width="6.50" height="3.00" fill="#5c5c5c" /><rect x="412.00" y="350.00" width="19.00" height="1.20" fill="#4fb89c" /><rect x="402.00" y="366.00" width="35.00" height="17.00" fill="#a00808" stroke="#dccb36" stroke-width="1.5"/><rect x="405.00" y="364.00" width="29.00" height="18.00" fill="#0a0a0a" /><rect x="405.00" y="364.00" width="6.50" height="15.00" fill="#bcbcbc" /><rect x="427.50" y="364.00" width="6.50" height="15.00" fill="#bcbcbc" /><rect x="411.50" y="379.00" width="16.00" height="3.00" fill="#8c8c8c" /><rect x="405.00" y="379.00" width="6.50" height="3.00" fill="#5c5c5c" /><rect x="427.50" y="379.00" width="6.50" height="3.00" fill="#5c5c5c" /><rect x="410.00" y="384.00" width="19.00" height="1.20" fill="#4fb89c" /><rect x="474.00" y="366.00" width="35.00" height="17.00" fill="#a00808" stroke="#dccb36" stroke-width="1.5"/><rect x="477.00" y="364.00" width="29.00" height="18.00" fill="#0a0a0a" /><rect x="477.00" y="364.00" width="6.50" height="15.00" fill="#bcbcbc" /><rect x="499.50" y="364.00" width="6.50" height="15.00" fill="#bcbcbc" /><rect x="483.50" y="379.00" width="16.00" height="3.00" fill="#8c8c8c" /><rect x="477.00" y="379.00" width="6.50" height="3.00" fill="#5c5c5c" /><rect x="499.50" y="379.00" width="6.50" height="3.00" fill="#5c5c5c" /><rect x="482.00" y="384.00" width="19.00" height="1.20" fill="#4fb89c" /><rect x="521.00" y="366.00" width="35.00" height="17.00" fill="#a00808" stroke="#dccb36" stroke-width="1.5"/><rect x="524.00" y="364.00" width="29.00" height="18.00" fill="#0a0a0a" /><rect x="524.00" y="364.00" width="6.50" height="15.00" fill="#bcbcbc" /><rect x="546.50" y="364.00" width="6.50" height="15.00" fill="#bcbcbc" /><rect x="530.50" y="379.00" width="16.00" height="3.00" fill="#8c8c8c" /><rect x="524.00" y="379.00" width="6.50" height="3.00" fill="#5c5c5c" /><rect x="546.50" y="379.00" width="6.50" height="3.00" fill="#5c5c5c" /><rect x="529.00" y="384.00" width="19.00" height="1.20" fill="#4fb89c" /><rect x="571.00" y="366.00" width="35.00" height="17.00" fill="#a00808" stroke="#dccb36" stroke-width="1.5"/><rect x="574.00" y="364.00" width="29.00" height="18.00" fill="#0a0a0a" /><rect x="574.00" y="364.00" width="6.50" height="15.00" fill="#bcbcbc" /><rect x="596.50" y="364.00" width="6.50" height="15.00" fill="#bcbcbc" /><rect x="580.50" y="379.00" width="16.00" height="3.00" fill="#8c8c8c" /><rect x="574.00" y="379.00" width="6.50" height="3.00" fill="#5c5c5c" /><rect x="596.50" y="379.00" width="6.50" height="3.00" fill="#5c5c5c" /><rect x="579.00" y="384.00" width="19.00" height="1.20" fill="#4fb89c" /><rect x="629.00" y="416.00" width="37.00" height="17.00" fill="#a00808" stroke="#dccb36" stroke-width="1.5"/><rect x="632.00" y="414.00" width="31.00" height="18.00" fill="#0a0a0a" /><rect x="632.00" y="414.00" width="6.50" height="15.00" fill="#bcbcbc" /><rect x="656.50" y="414.00" width="6.50" height="15.00" fill="#bcbcbc" /><rect x="638.50" y="429.00" width="18.00" height="3.00" fill="#8c8c8c" /><rect x="632.00" y="429.00" width="6.50" height="3.00" fill="#5c5c5c" /><rect x="656.50" y="429.00" width="6.50" height="3.00" fill="#5c5c5c" /><rect x="637.00" y="434.00" width="21.00" height="1.20" fill="#4fb89c" /><rect x="809.00" y="433.00" width="37.00" height="18.00" fill="#a00808" stroke="#dccb36" stroke-width="1.5"/><rect x="812.00" y="431.00" width="31.00" height="19.00" fill="#0a0a0a" /><rect x="812.00" y="431.00" width="6.50" height="16.00" fill="#bcbcbc" /><rect x="836.50" y="431.00" width="6.50" height="16.00" fill="#bcbcbc" /><rect x="818.50" y="447.00" width="18.00" height="3.00" fill="#8c8c8c" /><rect x="812.00" y="447.00" width="6.50" height="3.00" fill="#5c5c5c" /><rect x="836.50" y="447.00" width="6.50" height="3.00" fill="#5c5c5c" /><rect x="817.00" y="452.00" width="21.00" height="1.20" fill="#4fb89c" /><rect x="627.00" y="526.00" width="38.00" height="18.00" fill="#a00808" stroke="#dccb36" stroke-width="1.5"/><rect x="630.00" y="524.00" width="32.00" height="19.00" fill="#0a0a0a" /><rect x="630.00" y="524.00" width="6.50" height="16.00" fill="#bcbcbc" /><rect x="655.50" y="524.00" width="6.50" height="16.00" fill="#bcbcbc" /><rect x="636.50" y="540.00" width="19.00" height="3.00" fill="#8c8c8c" /><rect x="630.00" y="540.00" width="6.50" height="3.00" fill="#5c5c5c" /><rect x="655.50" y="540.00" width="6.50" height="3.00" fill="#5c5c5c" /><rect x="635.00" y="545.00" width="22.00" height="1.20" fill="#4fb89c" /><rect x="714.00" y="526.00" width="37.00" height="18.00" fill="#a00808" stroke="#dccb36" stroke-width="1.5"/><rect x="717.00" y="524.00" width="31.00" height="19.00" fill="#0a0a0a" /><rect x="717.00" y="524.00" width="6.50" height="16.00" fill="#bcbcbc" /><rect x="741.50" y="524.00" width="6.50" height="16.00" fill="#bcbcbc" /><rect x="723.50" y="540.00" width="18.00" height="3.00" fill="#8c8c8c" /><rect x="717.00" y="540.00" width="6.50" height="3.00" fill="#5c5c5c" /><rect x="741.50" y="540.00" width="6.50" height="3.00" fill="#5c5c5c" /><rect x="722.00" y="545.00" width="21.00" height="1.20" fill="#4fb89c" /><rect x="775.00" y="526.00" width="38.00" height="18.00" fill="#a00808" stroke="#dccb36" stroke-width="1.5"/><rect x="778.00" y="524.00" width="32.00" height="19.00" fill="#0a0a0a" /><rect x="778.00" y="524.00" width="6.50" height="16.00" fill="#bcbcbc" /><rect x="803.50" y="524.00" width="6.50" height="16.00" fill="#bcbcbc" /><rect x="784.50" y="540.00" width="19.00" height="3.00" fill="#8c8c8c" /><rect x="778.00" y="540.00" width="6.50" height="3.00" fill="#5c5c5c" /><rect x="803.50" y="540.00" width="6.50" height="3.00" fill="#5c5c5c" /><rect x="783.00" y="545.00" width="22.00" height="1.20" fill="#4fb89c" /><rect x="573.00" y="195.00" width="35.00" height="14.00" fill="#a00808" stroke="#dccb36" stroke-width="1.5"/><rect x="584.00" y="189.00" width="12.00" height="12.54" fill="#c97a2c" /><rect x="578.00" y="189.00" width="6.00" height="12.54" fill="#e4e4e4" /><rect x="596.00" y="189.00" width="6.00" height="12.54" fill="#e4e4e4" /><rect x="584.00" y="201.54" width="12.00" height="6.46" fill="#6a4018" /><rect x="578.00" y="201.54" width="6.00" height="6.46" fill="#6e6e6e" /><rect x="596.00" y="201.54" width="6.00" height="6.46" fill="#6e6e6e" /><rect x="583.00" y="210.00" width="14.00" height="1.20" fill="#4fb89c" /><rect x="810.00" y="389.00" width="42.00" height="15.00" fill="#a00808" stroke="#dccb36" stroke-width="1.5"/><rect x="821.00" y="383.00" width="19.00" height="13.20" fill="#c97a2c" /><rect x="815.00" y="383.00" width="6.00" height="13.20" fill="#e4e4e4" /><rect x="840.00" y="383.00" width="6.00" height="13.20" fill="#e4e4e4" /><rect x="821.00" y="396.20" width="19.00" height="6.80" fill="#6a4018" /><rect x="815.00" y="396.20" width="6.00" height="6.80" fill="#6e6e6e" /><rect x="840.00" y="396.20" width="6.00" height="6.80" fill="#6e6e6e" /><rect x="820.00" y="405.00" width="21.00" height="1.20" fill="#4fb89c" /><rect x="397.00" y="401.00" width="38.00" height="14.00" fill="#a00808" stroke="#dccb36" stroke-width="1.5"/><rect x="408.00" y="395.00" width="15.00" height="12.54" fill="#c97a2c" /><rect x="402.00" y="395.00" width="6.00" height="12.54" fill="#e4e4e4" /><rect x="423.00" y="395.00" width="6.00" height="12.54" fill="#e4e4e4" /><rect x="408.00" y="407.54" width="15.00" height="6.46" fill="#6a4018" /><rect x="402.00" y="407.54" width="6.00" height="6.46" fill="#6e6e6e" /><rect x="423.00" y="407.54" width="6.00" height="6.46" fill="#6e6e6e" /><rect x="407.00" y="416.00" width="17.00" height="1.20" fill="#4fb89c" /><rect x="395.00" y="436.00" width="38.00" height="14.00" fill="#a00808" stroke="#dccb36" stroke-width="1.5"/><rect x="406.00" y="430.00" width="15.00" height="12.54" fill="#c97a2c" /><rect x="400.00" y="430.00" width="6.00" height="12.54" fill="#e4e4e4" /><rect x="421.00" y="430.00" width="6.00" height="12.54" fill="#e4e4e4" /><rect x="406.00" y="442.54" width="15.00" height="6.46" fill="#6a4018" /><rect x="400.00" y="442.54" width="6.00" height="6.46" fill="#6e6e6e" /><rect x="421.00" y="442.54" width="6.00" height="6.46" fill="#6e6e6e" /><rect x="405.00" y="451.00" width="17.00" height="1.20" fill="#4fb89c" /><rect x="393.00" y="470.00" width="38.00" height="14.00" fill="#a00808" stroke="#dccb36" stroke-width="1.5"/><rect x="404.00" y="464.00" width="15.00" height="12.54" fill="#c97a2c" /><rect x="398.00" y="464.00" width="6.00" height="12.54" fill="#e4e4e4" /><rect x="419.00" y="464.00" width="6.00" height="12.54" fill="#e4e4e4" /><rect x="404.00" y="476.54" width="15.00" height="6.46" fill="#6a4018" /><rect x="398.00" y="476.54" width="6.00" height="6.46" fill="#6e6e6e" /><rect x="419.00" y="476.54" width="6.00" height="6.46" fill="#6e6e6e" /><rect x="403.00" y="485.00" width="17.00" height="1.20" fill="#4fb89c" /><rect x="391.00" y="506.00" width="38.00" height="14.00" fill="#a00808" stroke="#dccb36" stroke-width="1.5"/><rect x="402.00" y="500.00" width="15.00" height="12.54" fill="#c97a2c" /><rect x="396.00" y="500.00" width="6.00" height="12.54" fill="#e4e4e4" /><rect x="417.00" y="500.00" width="6.00" height="12.54" fill="#e4e4e4" /><rect x="402.00" y="512.54" width="15.00" height="6.46" fill="#6a4018" /><rect x="396.00" y="512.54" width="6.00" height="6.46" fill="#6e6e6e" /><rect x="417.00" y="512.54" width="6.00" height="6.46" fill="#6e6e6e" /><rect x="401.00" y="521.00" width="17.00" height="1.20" fill="#4fb89c" /><rect x="661.00" y="251.00" width="20.00" height="31.00" fill="#a00808" stroke="#dccb36" stroke-width="1.3"/><rect x="663.00" y="247.00" width="16.00" height="6.00" fill="#ececec" /><rect x="663.00" y="253.00" width="16.00" height="14.40" fill="#c97a2c" /><rect x="663.00" y="267.40" width="16.00" height="6.00" fill="#e0e0e0" /><rect x="663.00" y="273.40" width="16.00" height="5.60" fill="#6a6a6a" /><rect x="641.50" y="335.00" width="12.00" height="7.00" fill="#a00808" stroke="#dccb36" stroke-width="1.4"/><rect x="631.00" y="355.50" width="12.00" height="12.00" fill="#a00808" stroke="#dccb36" stroke-width="1.4"/><rect x="652.00" y="355.50" width="12.00" height="12.00" fill="#a00808" stroke="#dccb36" stroke-width="1.4"/><rect x="644.50" y="337.00" width="6.00" height="4.00" fill="#d6d6d6" /><rect x="634.00" y="357.50" width="6.00" height="7.00" fill="#d0d0d0" /><rect x="655.00" y="357.50" width="6.00" height="7.00" fill="#d0d0d0" /><rect x="630" y="340" width="35" height="17.5" rx="2.5" fill="#222"/><rect x="701.00" y="335.00" width="12.00" height="7.00" fill="#a00808" stroke="#dccb36" stroke-width="1.4"/><rect x="690.00" y="355.50" width="12.00" height="12.00" fill="#a00808" stroke="#dccb36" stroke-width="1.4"/><rect x="712.00" y="355.50" width="12.00" height="12.00" fill="#a00808" stroke="#dccb36" stroke-width="1.4"/><rect x="704.00" y="337.00" width="6.00" height="4.00" fill="#d6d6d6" /><rect x="693.00" y="357.50" width="6.00" height="7.00" fill="#d0d0d0" /><rect x="715.00" y="357.50" width="6.00" height="7.00" fill="#d0d0d0" /><rect x="689" y="340" width="36" height="17.5" rx="2.5" fill="#222"/><rect x="701.00" y="380.00" width="12.00" height="7.00" fill="#a00808" stroke="#dccb36" stroke-width="1.4"/><rect x="690.00" y="400.00" width="12.00" height="12.00" fill="#a00808" stroke="#dccb36" stroke-width="1.4"/><rect x="712.00" y="400.00" width="12.00" height="12.00" fill="#a00808" stroke="#dccb36" stroke-width="1.4"/><rect x="704.00" y="382.00" width="6.00" height="4.00" fill="#d6d6d6" /><rect x="693.00" y="402.00" width="6.00" height="7.00" fill="#d0d0d0" /><rect x="715.00" y="402.00" width="6.00" height="7.00" fill="#d0d0d0" /><rect x="689" y="385" width="36" height="17" rx="2.5" fill="#222"/><rect x="701.00" y="260.00" width="19.00" height="9.00" fill="#a00808" stroke="#dccb36" stroke-width="1.4"/><rect x="764.00" y="260.00" width="19.00" height="9.00" fill="#a00808" stroke="#dccb36" stroke-width="1.4"/><polygon points="707.00,263.00 714.00,263.00 720.00,259.00 720.00,265.00 714.00,268.50 707.00,268.50" fill="#f4f4f4" /><polygon points="777.00,263.00 770.00,263.00 764.00,259.00 764.00,265.00 770.00,268.50 777.00,268.50" fill="#f4f4f4" /><rect x="701.00" y="274.00" width="19.00" height="9.00" fill="#a00808" stroke="#dccb36" stroke-width="1.4"/><rect x="764.00" y="274.00" width="19.00" height="9.00" fill="#a00808" stroke="#dccb36" stroke-width="1.4"/><polygon points="707.00,277.00 714.00,277.00 720.00,273.00 720.00,279.00 714.00,282.50 707.00,282.50" fill="#f4f4f4" /><polygon points="777.00,277.00 770.00,277.00 764.00,273.00 764.00,279.00 770.00,282.50 777.00,282.50" fill="#f4f4f4" /><rect x="701.00" y="288.00" width="19.00" height="9.00" fill="#a00808" stroke="#dccb36" stroke-width="1.4"/><rect x="764.00" y="288.00" width="19.00" height="9.00" fill="#a00808" stroke="#dccb36" stroke-width="1.4"/><polygon points="707.00,291.00 714.00,291.00 720.00,287.00 720.00,293.00 714.00,296.50 707.00,296.50" fill="#f4f4f4" /><polygon points="777.00,291.00 770.00,291.00 764.00,287.00 764.00,293.00 770.00,296.50 777.00,296.50" fill="#f4f4f4" /><rect x="701.00" y="302.00" width="19.00" height="9.00" fill="#a00808" stroke="#dccb36" stroke-width="1.4"/><rect x="764.00" y="302.00" width="19.00" height="9.00" fill="#a00808" stroke="#dccb36" stroke-width="1.4"/><polygon points="707.00,305.00 714.00,305.00 720.00,301.00 720.00,307.00 714.00,310.50 707.00,310.50" fill="#f4f4f4" /><polygon points="777.00,305.00 770.00,305.00 764.00,301.00 764.00,307.00 770.00,310.50 777.00,310.50" fill="#f4f4f4" /><rect x="719" y="254" width="46" height="56" rx="2.5" fill="#232323"/><rect x="703.00" y="438.00" width="19.00" height="9.00" fill="#a00808" stroke="#dccb36" stroke-width="1.4"/><rect x="767.00" y="438.00" width="19.00" height="9.00" fill="#a00808" stroke="#dccb36" stroke-width="1.4"/><polygon points="709.00,441.00 716.00,441.00 722.00,437.00 722.00,443.00 716.00,446.50 709.00,446.50" fill="#f4f4f4" /><polygon points="780.00,441.00 773.00,441.00 767.00,437.00 767.00,443.00 773.00,446.50 780.00,446.50" fill="#f4f4f4" /><rect x="703.00" y="452.30" width="19.00" height="9.00" fill="#a00808" stroke="#dccb36" stroke-width="1.4"/><rect x="767.00" y="452.30" width="19.00" height="9.00" fill="#a00808" stroke="#dccb36" stroke-width="1.4"/><polygon points="709.00,455.30 716.00,455.30 722.00,451.30 722.00,457.30 716.00,460.80 709.00,460.80" fill="#f4f4f4" /><polygon points="780.00,455.30 773.00,455.30 767.00,451.30 767.00,457.30 773.00,460.80 780.00,460.80" fill="#f4f4f4" /><rect x="703.00" y="466.60" width="19.00" height="9.00" fill="#a00808" stroke="#dccb36" stroke-width="1.4"/><rect x="767.00" y="466.60" width="19.00" height="9.00" fill="#a00808" stroke="#dccb36" stroke-width="1.4"/><polygon points="709.00,469.60 716.00,469.60 722.00,465.60 722.00,471.60 716.00,475.10 709.00,475.10" fill="#f4f4f4" /><polygon points="780.00,469.60 773.00,469.60 767.00,465.60 767.00,471.60 773.00,475.10 780.00,475.10" fill="#f4f4f4" /><rect x="703.00" y="480.90" width="19.00" height="9.00" fill="#a00808" stroke="#dccb36" stroke-width="1.4"/><rect x="767.00" y="480.90" width="19.00" height="9.00" fill="#a00808" stroke="#dccb36" stroke-width="1.4"/><polygon points="709.00,483.90 716.00,483.90 722.00,479.90 722.00,485.90 716.00,489.40 709.00,489.40" fill="#f4f4f4" /><polygon points="780.00,483.90 773.00,483.90 767.00,479.90 767.00,485.90 773.00,489.40 780.00,489.40" fill="#f4f4f4" /><rect x="721" y="432" width="47" height="59" rx="2.5" fill="#232323"/><rect x="467.00" y="423.00" width="23.00" height="10.00" fill="#a00808" stroke="#dccb36" stroke-width="1.4"/><rect x="585.50" y="423.00" width="23.00" height="10.00" fill="#a00808" stroke="#dccb36" stroke-width="1.4"/><rect x="475.00" y="424.50" width="10.00" height="5.50" fill="#f4f4f4" /><polygon points="485.00,423.50 488.00,419.50 492.00,419.50 492.00,424.50 485.00,430.00" fill="#e8e8e8" /><rect x="590.50" y="424.50" width="10.00" height="5.50" fill="#f4f4f4" /><polygon points="590.50,423.50 587.50,419.50 583.50,419.50 583.50,424.50 590.50,430.00" fill="#e8e8e8" /><rect x="466.34" y="438.10" width="23.00" height="10.00" fill="#a00808" stroke="#dccb36" stroke-width="1.4"/><rect x="585.30" y="438.10" width="23.00" height="10.00" fill="#a00808" stroke="#dccb36" stroke-width="1.4"/><rect x="474.34" y="439.60" width="10.00" height="5.50" fill="#f4f4f4" /><polygon points="484.34,438.60 487.34,434.60 491.34,434.60 491.34,439.60 484.34,445.10" fill="#e8e8e8" /><rect x="590.30" y="439.60" width="10.00" height="5.50" fill="#f4f4f4" /><polygon points="590.30,438.60 587.30,434.60 583.30,434.60 583.30,439.60 590.30,445.10" fill="#e8e8e8" /><rect x="465.67" y="453.20" width="23.00" height="10.00" fill="#a00808" stroke="#dccb36" stroke-width="1.4"/><rect x="585.11" y="453.20" width="23.00" height="10.00" fill="#a00808" stroke="#dccb36" stroke-width="1.4"/><rect x="473.67" y="454.70" width="10.00" height="5.50" fill="#f4f4f4" /><polygon points="483.67,453.70 486.67,449.70 490.67,449.70 490.67,454.70 483.67,460.20" fill="#e8e8e8" /><rect x="590.11" y="454.70" width="10.00" height="5.50" fill="#f4f4f4" /><polygon points="590.11,453.70 587.11,449.70 583.11,449.70 583.11,454.70 590.11,460.20" fill="#e8e8e8" /><rect x="465.01" y="468.30" width="23.00" height="10.00" fill="#a00808" stroke="#dccb36" stroke-width="1.4"/><rect x="584.91" y="468.30" width="23.00" height="10.00" fill="#a00808" stroke="#dccb36" stroke-width="1.4"/><rect x="473.01" y="469.80" width="10.00" height="5.50" fill="#f4f4f4" /><polygon points="483.01,468.80 486.01,464.80 490.01,464.80 490.01,469.80 483.01,475.30" fill="#e8e8e8" /><rect x="589.91" y="469.80" width="10.00" height="5.50" fill="#f4f4f4" /><polygon points="589.91,468.80 586.91,464.80 582.91,464.80 582.91,469.80 589.91,475.30" fill="#e8e8e8" /><rect x="464.34" y="483.40" width="23.00" height="10.00" fill="#a00808" stroke="#dccb36" stroke-width="1.4"/><rect x="584.71" y="483.40" width="23.00" height="10.00" fill="#a00808" stroke="#dccb36" stroke-width="1.4"/><rect x="472.34" y="484.90" width="10.00" height="5.50" fill="#f4f4f4" /><polygon points="482.34,483.90 485.34,479.90 489.34,479.90 489.34,484.90 482.34,490.40" fill="#e8e8e8" /><rect x="589.71" y="484.90" width="10.00" height="5.50" fill="#f4f4f4" /><polygon points="589.71,483.90 586.71,479.90 582.71,479.90 582.71,484.90 589.71,490.40" fill="#e8e8e8" /><rect x="463.68" y="498.50" width="23.00" height="10.00" fill="#a00808" stroke="#dccb36" stroke-width="1.4"/><rect x="584.52" y="498.50" width="23.00" height="10.00" fill="#a00808" stroke="#dccb36" stroke-width="1.4"/><rect x="471.68" y="500.00" width="10.00" height="5.50" fill="#f4f4f4" /><polygon points="481.68,499.00 484.68,495.00 488.68,495.00 488.68,500.00 481.68,505.50" fill="#e8e8e8" /><rect x="589.52" y="500.00" width="10.00" height="5.50" fill="#f4f4f4" /><polygon points="589.52,499.00 586.52,495.00 582.52,495.00 582.52,500.00 589.52,505.50" fill="#e8e8e8" /><rect x="463.01" y="513.60" width="23.00" height="10.00" fill="#a00808" stroke="#dccb36" stroke-width="1.4"/><rect x="584.32" y="513.60" width="23.00" height="10.00" fill="#a00808" stroke="#dccb36" stroke-width="1.4"/><rect x="471.01" y="515.10" width="10.00" height="5.50" fill="#f4f4f4" /><polygon points="481.01,514.10 484.01,510.10 488.01,510.10 488.01,515.10 481.01,520.60" fill="#e8e8e8" /><rect x="589.32" y="515.10" width="10.00" height="5.50" fill="#f4f4f4" /><polygon points="589.32,514.10 586.32,510.10 582.32,510.10 582.32,515.10 589.32,520.60" fill="#e8e8e8" /><rect x="462.35" y="528.70" width="23.00" height="10.00" fill="#a00808" stroke="#dccb36" stroke-width="1.4"/><rect x="584.13" y="528.70" width="23.00" height="10.00" fill="#a00808" stroke="#dccb36" stroke-width="1.4"/><rect x="470.35" y="530.20" width="10.00" height="5.50" fill="#f4f4f4" /><polygon points="480.35,529.20 483.35,525.20 487.35,525.20 487.35,530.20 480.35,535.70" fill="#e8e8e8" /><rect x="589.13" y="530.20" width="10.00" height="5.50" fill="#f4f4f4" /><polygon points="589.13,529.20 586.13,525.20 582.13,525.20 582.13,530.20 589.13,535.70" fill="#e8e8e8" /><rect x="461.68" y="543.80" width="23.00" height="10.00" fill="#a00808" stroke="#dccb36" stroke-width="1.4"/><rect x="583.93" y="543.80" width="23.00" height="10.00" fill="#a00808" stroke="#dccb36" stroke-width="1.4"/><rect x="469.68" y="545.30" width="10.00" height="5.50" fill="#f4f4f4" /><polygon points="479.68,544.30 482.68,540.30 486.68,540.30 486.68,545.30 479.68,550.80" fill="#e8e8e8" /><rect x="588.93" y="545.30" width="10.00" height="5.50" fill="#f4f4f4" /><polygon points="588.93,544.30 585.93,540.30 581.93,540.30 581.93,545.30 588.93,550.80" fill="#e8e8e8" /><rect x="461.02" y="558.90" width="23.00" height="10.00" fill="#a00808" stroke="#dccb36" stroke-width="1.4"/><rect x="583.73" y="558.90" width="23.00" height="10.00" fill="#a00808" stroke="#dccb36" stroke-width="1.4"/><rect x="469.02" y="560.40" width="10.00" height="5.50" fill="#f4f4f4" /><polygon points="479.02,559.40 482.02,555.40 486.02,555.40 486.02,560.40 479.02,565.90" fill="#e8e8e8" /><rect x="588.73" y="560.40" width="10.00" height="5.50" fill="#f4f4f4" /><polygon points="588.73,559.40 585.73,555.40 581.73,555.40 581.73,560.40 588.73,565.90" fill="#e8e8e8" /><rect x="460.36" y="574.00" width="23.00" height="10.00" fill="#a00808" stroke="#dccb36" stroke-width="1.4"/><rect x="583.54" y="574.00" width="23.00" height="10.00" fill="#a00808" stroke="#dccb36" stroke-width="1.4"/><rect x="468.36" y="575.50" width="10.00" height="5.50" fill="#f4f4f4" /><polygon points="478.36,574.50 481.36,570.50 485.36,570.50 485.36,575.50 478.36,581.00" fill="#e8e8e8" /><rect x="588.54" y="575.50" width="10.00" height="5.50" fill="#f4f4f4" /><polygon points="588.54,574.50 585.54,570.50 581.54,570.50 581.54,575.50 588.54,581.00" fill="#e8e8e8" /><rect x="459.69" y="589.10" width="23.00" height="10.00" fill="#a00808" stroke="#dccb36" stroke-width="1.4"/><rect x="583.34" y="589.10" width="23.00" height="10.00" fill="#a00808" stroke="#dccb36" stroke-width="1.4"/><rect x="467.69" y="590.60" width="10.00" height="5.50" fill="#f4f4f4" /><polygon points="477.69,589.60 480.69,585.60 484.69,585.60 484.69,590.60 477.69,596.10" fill="#e8e8e8" /><rect x="588.34" y="590.60" width="10.00" height="5.50" fill="#f4f4f4" /><polygon points="588.34,589.60 585.34,585.60 581.34,585.60 581.34,590.60 588.34,596.10" fill="#e8e8e8" /><rect x="459.03" y="604.20" width="23.00" height="10.00" fill="#a00808" stroke="#dccb36" stroke-width="1.4"/><rect x="583.14" y="604.20" width="23.00" height="10.00" fill="#a00808" stroke="#dccb36" stroke-width="1.4"/><rect x="467.03" y="605.70" width="10.00" height="5.50" fill="#f4f4f4" /><polygon points="477.03,604.70 480.03,600.70 484.03,600.70 484.03,605.70 477.03,611.20" fill="#e8e8e8" /><rect x="588.14" y="605.70" width="10.00" height="5.50" fill="#f4f4f4" /><polygon points="588.14,604.70 585.14,600.70 581.14,600.70 581.14,605.70 588.14,611.20" fill="#e8e8e8" /><rect x="458.36" y="619.30" width="23.00" height="10.00" fill="#a00808" stroke="#dccb36" stroke-width="1.4"/><rect x="582.95" y="619.30" width="23.00" height="10.00" fill="#a00808" stroke="#dccb36" stroke-width="1.4"/><rect x="466.36" y="620.80" width="10.00" height="5.50" fill="#f4f4f4" /><polygon points="476.36,619.80 479.36,615.80 483.36,615.80 483.36,620.80 476.36,626.30" fill="#e8e8e8" /><rect x="587.95" y="620.80" width="10.00" height="5.50" fill="#f4f4f4" /><polygon points="587.95,619.80 584.95,615.80 580.95,615.80 580.95,620.80 587.95,626.30" fill="#e8e8e8" /><path d="M493,412 L579,412 Q581.5,412 581.5,414.5 L577,630 L483,630 L488.5,414.5 Q489,412 493,412 Z" fill="#222222"/><polygon points="486.00,534.00 579.00,534.00 577.00,630.00 483.00,630.00" fill="#1a1a1a" /><rect x="382.00" y="542.00" width="67.00" height="18.00" fill="#a00808" stroke="#dccb36" stroke-width="1.5"/><rect x="378.50" y="610.00" width="67.00" height="18.00" fill="#a00808" stroke="#dccb36" stroke-width="1.5"/><rect x="387.00" y="546.00" width="6.00" height="11.00" fill="#e8e8e8" /><rect x="430.00" y="546.00" width="6.00" height="11.00" fill="#e8e8e8" /><rect x="384.00" y="614.00" width="6.00" height="11.00" fill="#e8e8e8" /><rect x="427.00" y="614.00" width="6.00" height="11.00" fill="#e8e8e8" /><polygon points="394.00,531.00 429.00,531.00 425.00,630.00 389.00,630.00" fill="#1e1e1e" /><polygon points="429.00,531.00 433.50,534.00 429.50,626.00 425.00,630.00" fill="#121212" /><path d="M398,532 Q411,544 424,532" fill="none" stroke="#2e2e2e" stroke-width="1"/><circle cx="407" cy="614" r="5.5" fill="none" stroke="#2c2c2c" stroke-width="1"/><rect x="626.00" y="500.00" width="41.00" height="10.00" fill="#a00808" stroke="#dccb36" stroke-width="1.4"/><rect x="626.00" y="444.00" width="41.00" height="8.00" fill="#ececec" /><rect x="626.00" y="452.00" width="41.00" height="39.00" fill="#c98530" /><rect x="626.00" y="491.00" width="41.00" height="8.00" fill="#e6e6e6" /><rect x="626.00" y="498.00" width="41.00" height="5.00" fill="#707070" /><polygon points="399.00,254.00 454.20,254.00 463.00,275.00 462.70,284.00 458.00,288.30 414.00,288.30 410.30,285.00" fill="#881c26" /><polygon points="453.00,236.00 463.00,266.50 463.00,284.00 454.20,256.60" fill="#3c1418" /><rect x="399" y="230.7" width="55.2" height="26" rx="4.5" fill="#ff4048"/><polygon points="505.00,209.00 510.00,221.00 509.00,313.60 508.00,317.60 502.00,289.70" fill="#353510" /><polygon points="470.00,289.70 502.00,289.70 508.00,317.60 478.00,317.60" fill="#7a7a22" /><polygon points="472.00,209.00 505.00,209.00 502.00,289.70 470.00,289.70" fill="#f6f632" /><polygon points="577.20,208.40 582.20,220.40 580.70,314.00 579.70,318.00 575.50,289.40" fill="#353510" /><polygon points="543.40,289.40 575.50,289.40 579.70,318.00 549.30,318.00" fill="#7a7a22" /><polygon points="546.00,208.40 577.20,208.40 575.50,289.40 543.40,289.40" fill="#f6f632" /><polygon points="870.00,354.00 862.00,378.00 862.00,411.00 870.00,411.00" fill="#3c3c12" /><polygon points="870.00,384.00 962.00,384.00 960.00,411.00 863.00,411.00" fill="#868620" /><rect x="870.00" y="354.00" width="92.00" height="30.00" fill="#f6f632" /><polygon points="398.00,168.00 538.00,168.00 546.00,223.00 412.00,223.00" fill="#8e8e8e" /><polygon points="398.50,170.50 427.80,177.60 439.50,204.50 414.90,222.00" fill="#8c0046" /><polygon points="414.90,222.00 439.50,206.80 444.20,222.00" fill="#141414" /><text x="424" y="187.5" font-size="14" font-weight="bold" fill="#8c0046" textLength="104" lengthAdjust="spacingAndGlyphs">PA22 OO</text><text x="428" y="199" font-size="14" font-weight="bold" fill="#8c0046" textLength="100" lengthAdjust="spacingAndGlyphs">POWER</text><rect x="444.00" y="198.60" width="75.00" height="4.70" fill="#8c0046" /><text x="440" y="214" font-size="13" font-weight="bold" fill="#8c0046" textLength="40" lengthAdjust="spacingAndGlyphs">ESS</text><polygon points="519.00,190.40 546.00,222.00 526.00,214.00" fill="#8c0046" /><polygon points="445.00,212.00 520.00,206.00 530.00,214.00 470.00,220.00" fill="#8c0046" opacity="0.8"/><rect x="398.00" y="168.00" width="140.00" height="4.00" fill="#777" /><polygon points="541.00,89.00 550.00,147.00 547.00,221.00 545.00,221.00 538.00,168.00" fill="#380020" /><polygon points="403.00,89.00 541.00,89.00 538.00,168.00 398.00,168.00" fill="#ffffff" /><polyline points="403,89 398,168 538,168 541,89" fill="none" stroke="#ff0a82" stroke-width="2.5"/><polygon points="627.00,86.00 812.00,86.00 812.00,178.00 627.00,178.00" fill="#0040e8" /><polygon points="627.00,178.00 812.00,178.00 808.00,227.00 630.00,227.00" fill="#001f70" /><rect x="642.00" y="98.00" width="154.00" height="71.00" fill="#002070" /><polygon points="796.00,98.00 796.00,169.00 790.00,169.00 790.00,110.00" fill="#0a32a8" /><polygon points="642.00,98.00 650.00,108.00 650.00,169.00 642.00,169.00" fill="#0a2ea0" /><rect x="643.00" y="143.00" width="41.00" height="25.00" fill="#fde68e" /><rect x="753.00" y="143.00" width="38.00" height="25.00" fill="#fde68e" /><rect x="691.00" y="143.00" width="54.00" height="64.00" fill="#fde68e" /><rect x="714.00" y="143.00" width="8.00" height="48.00" fill="#012a90" /><rect x="691.00" y="207.00" width="54.00" height="17.00" fill="#0848ea" /><rect x="684.00" y="143.00" width="7.00" height="25.00" fill="#012a90" /><rect x="745.00" y="143.00" width="8.00" height="25.00" fill="#012a90" /><rect x="685.00" y="117.00" width="6.00" height="5.00" fill="#0a50f4" /><rect x="685.00" y="122.00" width="6.00" height="3.00" fill="#0a2ea0" /><rect x="685.00" y="144.00" width="6.00" height="5.00" fill="#0a50f4" /><rect x="716.00" y="117.00" width="6.00" height="5.00" fill="#0a50f4" /><rect x="716.00" y="122.00" width="6.00" height="3.00" fill="#0a2ea0" /><rect x="716.00" y="144.00" width="6.00" height="5.00" fill="#0a50f4" /><rect x="747.00" y="117.00" width="6.00" height="5.00" fill="#0a50f4" /><rect x="747.00" y="122.00" width="6.00" height="3.00" fill="#0a2ea0" /><rect x="747.00" y="144.00" width="6.00" height="5.00" fill="#0a50f4" /><circle cx="669.6" cy="551" r="6" fill="#0a46f0"/><circle cx="722.4" cy="551" r="6" fill="#0a46f0"/><circle cx="776.3" cy="551" r="6" fill="#0a46f0"/><polygon points="621.50,549.50 825.60,549.50 825.60,669.00 621.50,669.00" fill="#0040e8" /><polygon points="621.50,669.00 825.60,669.00 820.00,689.50 624.00,689.50" fill="#001f70" /><polygon points="637.50,566.70 809.50,566.70 803.00,590.80 639.80,590.80" fill="#012076" /><polygon points="621.50,549.50 637.50,566.70 639.80,657.00 621.50,669.00" fill="#0a3ed8" /><polygon points="825.60,549.50 809.50,566.70 803.00,657.00 825.60,669.00" fill="#0a3ed8" /><rect x="639.80" y="590.80" width="163.00" height="63.00" fill="#fde68e" /><polygon points="802.70,591.00 809.50,566.70 809.50,657.00 802.70,657.00" fill="#01259a" /><polygon points="637.50,566.70 639.80,590.80 639.80,657.00 637.50,657.00" fill="#01259a" /><rect x="692.60" y="653.00" width="60.70" height="16.50" fill="#fde68e" /><polygon points="630.00,658.60 637.20,653.40 692.60,653.40 692.60,658.60" fill="#00207a" /><polygon points="753.30,653.40 803.00,653.40 810.00,658.60 753.30,658.60" fill="#00207a" /><rect x="692.60" y="669.50" width="60.70" height="20.00" fill="#0040e8" /><polygon points="753.30,669.00 757.00,654.00 757.00,690.00 753.30,690.00" fill="#01259a" /><polygon points="685.70,590.80 692.70,590.80 692.70,618.30 685.70,618.30" fill="#012a90" /><polygon points="685.70,590.80 692.70,590.80 692.70,594.80 685.70,594.80" fill="#0a50f4" /><polygon points="685.70,624.00 692.70,624.00 692.70,650.40 685.70,650.40" fill="#012a90" /><polygon points="685.70,624.00 692.70,624.00 692.70,628.00 685.70,628.00" fill="#0a50f4" /><polygon points="719.50,590.80 726.50,590.80 725.00,618.30 718.00,618.30" fill="#012a90" /><polygon points="719.50,590.80 726.50,590.80 726.35,594.80 719.35,594.80" fill="#0a50f4" /><polygon points="719.50,624.00 726.50,624.00 725.00,650.40 718.00,650.40" fill="#012a90" /><polygon points="719.50,624.00 726.50,624.00 726.35,628.00 719.35,628.00" fill="#0a50f4" /><polygon points="753.50,590.80 760.50,590.80 757.50,618.30 750.50,618.30" fill="#012a90" /><polygon points="753.50,590.80 760.50,590.80 760.20,594.80 753.20,594.80" fill="#0a50f4" /><polygon points="753.50,624.00 760.50,624.00 757.50,650.40 750.50,650.40" fill="#012a90" /><polygon points="753.50,624.00 760.50,624.00 760.20,628.00 753.20,628.00" fill="#0a50f4" /><circle cx="846" cy="210" r="19.5" fill="#a00808" stroke="#e0d040" stroke-width="1.6"/><ellipse cx="849" cy="207" rx="6" ry="4" fill="#6a6a12"/><polygon points="838.00,216.00 872.00,206.00 872.00,215.00 848.00,221.00 840.00,221.00" fill="#8a0a8a" /><polygon points="834.00,211.00 872.00,200.00 872.00,207.00 834.00,218.00" fill="#ff24ff" /><circle cx="850" cy="310" r="19.5" fill="#a00808" stroke="#e0d040" stroke-width="1.6"/><ellipse cx="853" cy="307" rx="6" ry="4" fill="#6a6a12"/><polygon points="842.00,316.00 872.00,306.00 872.00,315.00 852.00,321.00 844.00,321.00" fill="#8a0a8a" /><polygon points="838.00,311.00 872.00,300.00 872.00,307.00 838.00,318.00" fill="#ff24ff" /><polygon points="1051.00,204.00 1150.00,204.00 1150.00,202.00 1270.00,202.00 1279.00,214.00 1292.00,235.75 1292.00,239.80 1276.00,269.50 1051.00,269.50" fill="#ff00ff" /><polygon points="1150.00,202.00 1270.00,202.00 1279.00,214.00 1287.00,235.75 1150.00,235.75" fill="#d600d6" /><rect x="1051" y="198" width="99" height="1.2" rx="2" fill="#7a3a00"/><rect x="1051" y="199.08" width="99" height="3.3" rx="2" fill="#0000b4"/><rect x="1051.00" y="202.20" width="102.00" height="1.80" fill="#ff8000" /><rect x="1051" y="259.5" width="227" height="10" fill="url(#shb)"/><ellipse cx="1048" cy="233.5" rx="4" ry="49.5" fill="#ff8a00"/><path d="M999.025,184 Q993.775,177 988.525,187 Q980.125,233.5 988.525,280 Q993.775,290 999.025,283 Q990.625,233.5 999.025,184 Z" fill="#c000c0" stroke="#6e006e" stroke-width="1.6"/><path d="M993.775,186 Q985.9,233.5 993.775,281" stroke="#f400f4" stroke-width="3.99" fill="none"/><path d="M1009.52,184 Q1004.27,177 999.025,187 Q990.625,233.5 999.025,280 Q1004.27,290 1009.52,283 Q1001.12,233.5 1009.52,184 Z" fill="#c000c0" stroke="#6e006e" stroke-width="1.6"/><path d="M1004.27,186 Q996.4,233.5 1004.27,281" stroke="#f400f4" stroke-width="3.99" fill="none"/><path d="M1020.02,184 Q1014.77,177 1009.52,187 Q1001.12,233.5 1009.52,280 Q1014.77,290 1020.02,283 Q1011.62,233.5 1020.02,184 Z" fill="#c000c0" stroke="#6e006e" stroke-width="1.6"/><path d="M1014.77,186 Q1006.9,233.5 1014.77,281" stroke="#f400f4" stroke-width="3.99" fill="none"/><path d="M1030.53,184 Q1025.28,177 1020.02,187 Q1011.62,233.5 1020.02,280 Q1025.28,290 1030.53,283 Q1022.12,233.5 1030.53,184 Z" fill="#c000c0" stroke="#6e006e" stroke-width="1.6"/><path d="M1025.28,186 Q1017.4,233.5 1025.28,281" stroke="#f400f4" stroke-width="3.99" fill="none"/><path d="M1041.03,184 Q1035.78,177 1030.53,187 Q1022.12,233.5 1030.53,280 Q1035.78,290 1041.03,283 Q1032.62,233.5 1041.03,184 Z" fill="#c000c0" stroke="#6e006e" stroke-width="1.6"/><path d="M1035.78,186 Q1027.9,233.5 1035.78,281" stroke="#f400f4" stroke-width="3.99" fill="none"/><path d="M1051.53,184 Q1046.28,177 1041.03,187 Q1032.62,233.5 1041.03,280 Q1046.28,290 1051.53,283 Q1043.12,233.5 1051.53,184 Z" fill="#c000c0" stroke="#6e006e" stroke-width="1.6"/><path d="M1046.28,186 Q1038.4,233.5 1046.28,281" stroke="#f400f4" stroke-width="3.99" fill="none"/><path d="M1048,194 Q1054,233.5 1048,273" stroke="#ff8a00" stroke-width="1.8" fill="none"/><path d="M999.55,188 Q991.15,233.5 999.55,279" stroke="#ffffff" stroke-width="1.6" fill="none"/><path d="M993.25,188 Q984.85,233.5 993.25,279" stroke="#ff8a00" stroke-width="1.6" fill="none"/><polygon points="880.00,165.00 870.00,193.00 872.00,302.00 880.00,310.00" fill="#3c0a3c" /><polygon points="874.00,268.00 988.00,268.00 988.00,292.00 978.00,302.00 974.00,310.00 880.00,310.00" fill="#8a008a" /><polygon points="958.00,282.00 988.00,276.00 988.00,294.00 962.00,300.00" fill="#9a009a" /><rect x="880" y="153" width="108" height="115" rx="3" fill="#ff00ff"/><rect x="885" y="161" width="98" height="99" fill="none" stroke="#c800c8" stroke-width="1.2"/><rect x="885.00" y="161.00" width="98.00" height="5.00" fill="#b000b0" opacity="0.7"/><circle cx="858" cy="485" r="21" fill="#a00808" stroke="#e0d040" stroke-width="1.6"/><ellipse cx="861" cy="482" rx="6" ry="4" fill="#6a6a12"/><polygon points="850.00,491.00 885.00,481.00 885.00,490.00 860.00,496.00 852.00,496.00" fill="#8a0a8a" /><polygon points="846.00,486.00 885.00,475.00 885.00,482.00 846.00,493.00" fill="#ff24ff" /><circle cx="861" cy="598" r="21" fill="#a00808" stroke="#e0d040" stroke-width="1.6"/><ellipse cx="864" cy="595" rx="6" ry="4" fill="#6a6a12"/><polygon points="853.00,604.00 885.00,594.00 885.00,603.00 863.00,609.00 855.00,609.00" fill="#8a0a8a" /><polygon points="849.00,599.00 885.00,588.00 885.00,595.00 849.00,606.00" fill="#ff24ff" /><polygon points="1079.00,497.70 1181.00,497.70 1181.00,488.40 1312.00,488.40 1321.00,500.40 1334.00,534.96 1334.00,539.47 1318.00,563.50 1079.00,563.50" fill="#ff00ff" /><polygon points="1181.00,488.40 1312.00,488.40 1321.00,500.40 1329.00,534.96 1181.00,534.96" fill="#d600d6" /><rect x="1079" y="486.4" width="102" height="2.26" rx="2" fill="#7a3a00"/><rect x="1079" y="488.434" width="102" height="6.215" rx="2" fill="#0000b4"/><rect x="1079.00" y="494.31" width="105.00" height="3.39" fill="#ff8000" /><rect x="1079" y="553.5" width="241" height="10" fill="url(#shb)"/><ellipse cx="1076" cy="525" rx="4" ry="53" fill="#ff8a00"/><path d="M1020.42,472 Q1014.51,465 1008.59,475 Q999.125,525 1008.59,575 Q1014.51,585 1020.42,578 Q1010.96,525 1020.42,472 Z" fill="#c000c0" stroke="#6e006e" stroke-width="1.6"/><path d="M1014.51,474 Q1005.63,525 1014.51,576" stroke="#f400f4" stroke-width="4.49667" fill="none"/><path d="M1032.26,472 Q1026.34,465 1020.43,475 Q1010.96,525 1020.43,575 Q1026.34,585 1032.26,578 Q1022.79,525 1032.26,472 Z" fill="#c000c0" stroke="#6e006e" stroke-width="1.6"/><path d="M1026.34,474 Q1017.47,525 1026.34,576" stroke="#f400f4" stroke-width="4.49667" fill="none"/><path d="M1044.09,472 Q1038.18,465 1032.26,475 Q1022.79,525 1032.26,575 Q1038.18,585 1044.09,578 Q1034.62,525 1044.09,472 Z" fill="#c000c0" stroke="#6e006e" stroke-width="1.6"/><path d="M1038.18,474 Q1029.3,525 1038.18,576" stroke="#f400f4" stroke-width="4.49667" fill="none"/><path d="M1055.92,472 Q1050.01,465 1044.09,475 Q1034.62,525 1044.09,575 Q1050.01,585 1055.92,578 Q1046.46,525 1055.92,472 Z" fill="#c000c0" stroke="#6e006e" stroke-width="1.6"/><path d="M1050.01,474 Q1041.13,525 1050.01,576" stroke="#f400f4" stroke-width="4.49667" fill="none"/><path d="M1067.76,472 Q1061.84,465 1055.92,475 Q1046.46,525 1055.92,575 Q1061.84,585 1067.76,578 Q1058.29,525 1067.76,472 Z" fill="#c000c0" stroke="#6e006e" stroke-width="1.6"/><path d="M1061.84,474 Q1052.97,525 1061.84,576" stroke="#f400f4" stroke-width="4.49667" fill="none"/><path d="M1079.59,472 Q1073.68,465 1067.76,475 Q1058.29,525 1067.76,575 Q1073.68,585 1079.59,578 Q1070.12,525 1079.59,472 Z" fill="#c000c0" stroke="#6e006e" stroke-width="1.6"/><path d="M1073.68,474 Q1064.8,525 1073.68,576" stroke="#f400f4" stroke-width="4.49667" fill="none"/><path d="M1076,482 Q1082,525 1076,568" stroke="#ff8a00" stroke-width="1.8" fill="none"/><path d="M1021.02,476 Q1011.55,525 1021.02,574" stroke="#ffffff" stroke-width="1.6" fill="none"/><path d="M1013.92,476 Q1004.45,525 1013.92,574" stroke="#ff8a00" stroke-width="1.6" fill="none"/><polygon points="893.00,456.00 883.00,484.00 885.00,592.00 893.00,600.00" fill="#3c0a3c" /><polygon points="887.00,576.00 1008.00,576.00 1008.00,582.00 998.00,592.00 994.00,600.00 893.00,600.00" fill="#8a008a" /><polygon points="978.00,590.00 1008.00,584.00 1008.00,584.00 982.00,590.00" fill="#9a009a" /><rect x="893" y="444" width="115" height="132" rx="3" fill="#ff00ff"/><rect x="898" y="452" width="105" height="116" fill="none" stroke="#c800c8" stroke-width="1.2"/><rect x="898.00" y="452.00" width="105.00" height="5.00" fill="#b000b0" opacity="0.7"/><text x="733" y="247" font-size="17" fill="#4fb89c" textLength="19" lengthAdjust="spacingAndGlyphs" >U2</text><text x="637" y="333" font-size="17.5" fill="#4fb89c" textLength="21" lengthAdjust="spacingAndGlyphs" >Q2</text><text x="696" y="333" font-size="17.5" fill="#4fb89c" textLength="21" lengthAdjust="spacingAndGlyphs" >Q3</text><text x="696" y="377" font-size="17.5" fill="#4fb89c" textLength="21" lengthAdjust="spacingAndGlyphs" >Q1</text><text x="733" y="430" font-size="15" fill="#4fb89c" textLength="19" lengthAdjust="spacingAndGlyphs" >U1</text><text x="417" y="302" font-size="16" fill="#4fb89c" textLength="22" lengthAdjust="spacingAndGlyphs" >C7</text><text x="527" y="413" font-size="15" fill="#4fb89c" textLength="20" lengthAdjust="spacingAndGlyphs" >U4</text><text transform="translate(841.5,276) rotate(-90)" font-size="15" fill="#4fb89c" textLength="30" lengthAdjust="spacingAndGlyphs">RV1</text><text transform="translate(857,289) rotate(-90)" font-size="15" fill="#4fb89c" textLength="58" lengthAdjust="spacingAndGlyphs">10ktin</text><text transform="translate(850,560) rotate(-90)" font-size="16" fill="#4fb89c" textLength="38" lengthAdjust="spacingAndGlyphs">RV2</text><text transform="translate(870,576) rotate(-90)" font-size="16" fill="#4fb89c" textLength="67" lengthAdjust="spacingAndGlyphs">10ktin</text><polyline points="867.40,209.00 867.40,317.00 976.00,317.00 976.00,306.70" fill="none" stroke="#4fb89c" stroke-width="1.3"/><polyline points="986.70,293.80 1125.00,292.00 1130.00,288.00 1130.00,270.00 1051.00,270.00" fill="none" stroke="#4fb89c" stroke-width="1.3"/><polyline points="880.70,489.00 880.70,606.00 998.00,606.00" fill="none" stroke="#4fb89c" stroke-width="1.3"/><polyline points="1067.00,578.00 1155.00,578.00 1160.00,573.00 1160.00,563.50" fill="none" stroke="#4fb89c" stroke-width="1.3"/><text transform="translate(465,597) rotate(-90)" font-size="17" fill="#4fb89c" textLength="20" lengthAdjust="spacingAndGlyphs">X1</text><polyline points="388,631 437,631 437,533" fill="none" stroke="#4fb89c" stroke-width="1.2"/><polyline points="483,633 483,636 577,636 577,633" fill="none" stroke="#4fb89c" stroke-width="1.2"/><text x="381" y="669.5" font-size="31" fill="#97016a" font-style="italic" stroke="#97016a" stroke-width="0.2" textLength="168" lengthAdjust="spacing">(c) voltwide</text><text x="877" y="644" font-size="28.5" fill="#97016a" stroke="#97016a" stroke-width="0.3" textLength="94" lengthAdjust="spacingAndGlyphs">MMXIIX</text><text x="855" y="669.3" font-size="28.5" fill="#97016a" stroke="#97016a" stroke-width="0.3" textLength="115" lengthAdjust="spacing">&#8211;07&#8211;26</text><rect x="682.50" y="86.00" width="1.00" height="315.00" fill="#1a1a40" opacity="0.5"/><rect x="682.40" y="700.00" width="1.30" height="17.00" fill="#4a9a5a" /></g><rect x="0.00" y="87.00" width="1.00" height="630.00" fill="#a2a2a2" /><rect x="0.00" y="716.50" width="1366.00" height="1.00" fill="#a8a8a8" /></svg>
</body></html>
